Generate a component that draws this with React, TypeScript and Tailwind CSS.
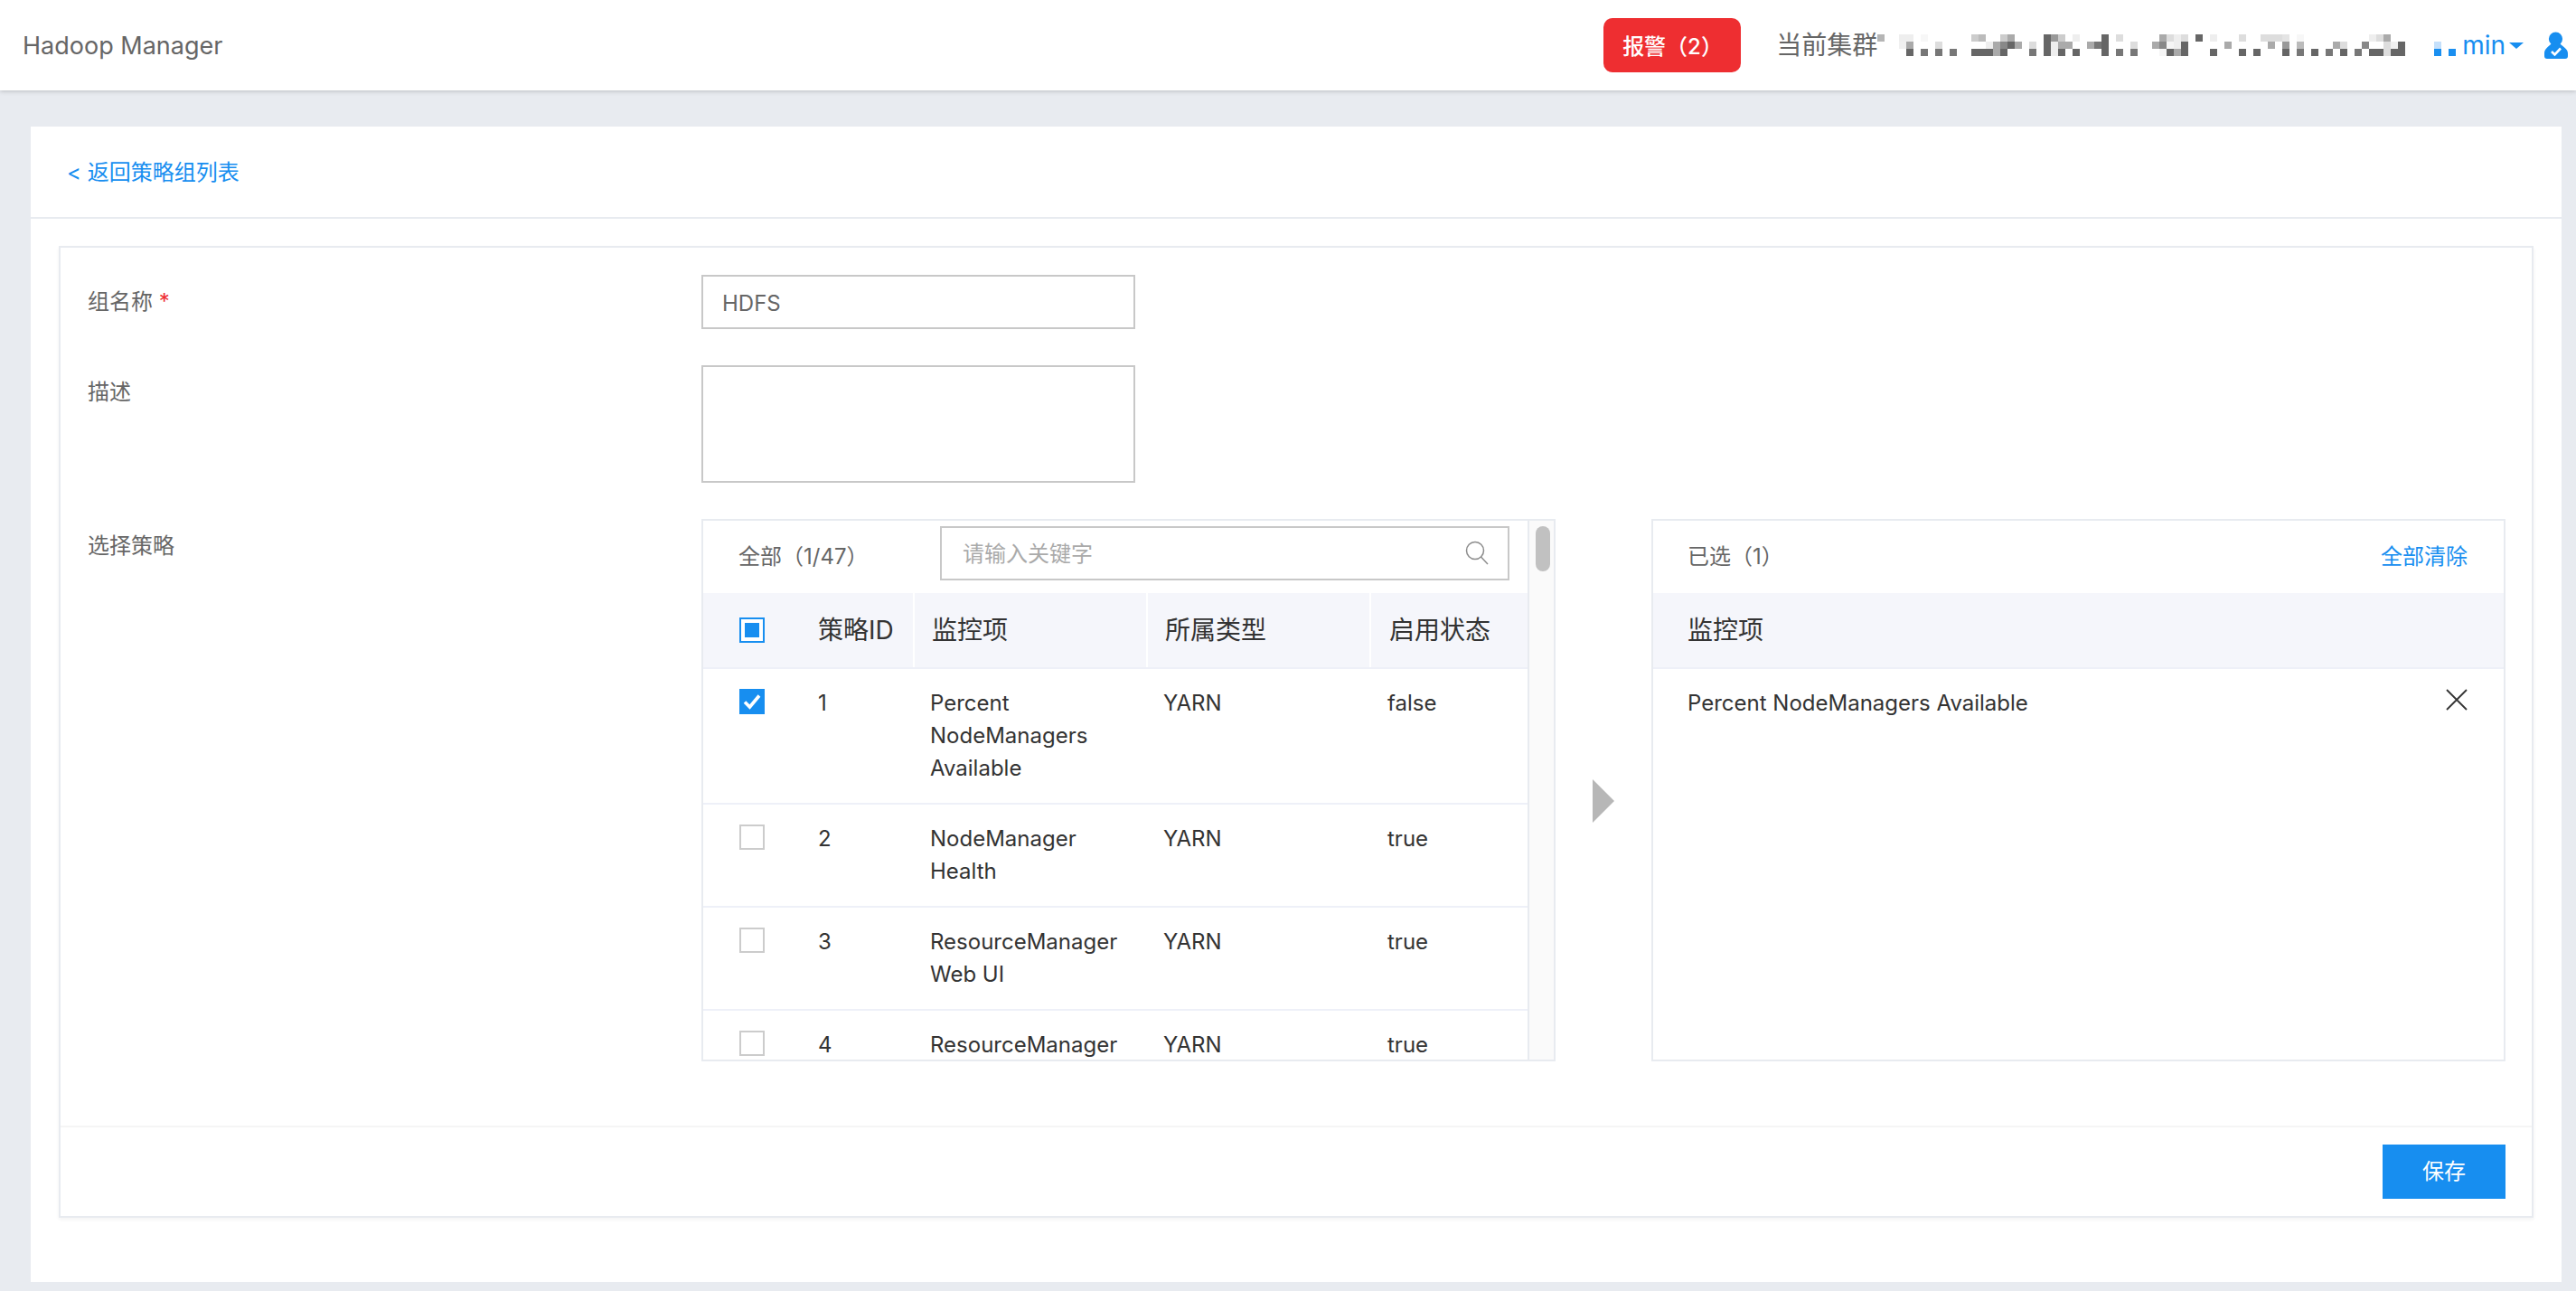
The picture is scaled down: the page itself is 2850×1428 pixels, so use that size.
import { Fragment } from 'react';

// Pixelated (redacted) cluster name: [column, colour] per row, 8px cells
const MOSAIC: [number, string][][] = [
  [[0, '#b5b5b5'], [3, '#eeeeee'], [4, '#eeeeee'], [6, '#f7f7f7'], [13, '#cccccc'], [14, '#bbbbbb'], [17, '#cccccc'], [18, '#aaaaaa'], [23, '#666666'], [24, '#999999'], [25, '#cccccc'], [27, '#eeeeee'], [31, '#666666'], [33, '#dddddd'], [39, '#aaaaaa'], [40, '#dddddd'], [41, '#eeeeee'], [42, '#dddddd'], [44, '#666666'], [46, '#eeeeee'], [50, '#dddddd'], [53, '#dddddd'], [54, '#dddddd'], [55, '#dddddd'], [56, '#e4e4e4'], [58, '#f7f7f7'], [68, '#eeeeee'], [69, '#dddddd'], [70, '#aaaaaa']],
  [[3, '#f0f0f0'], [4, '#aaaaaa'], [8, '#dddddd'], [15, '#eeeeee'], [16, '#aaaaaa'], [17, '#888888'], [18, '#666666'], [19, '#aaaaaa'], [21, '#dddddd'], [23, '#666666'], [24, '#eeeeee'], [25, '#aaaaaa'], [26, '#aaaaaa'], [29, '#aaaaaa'], [30, '#777777'], [31, '#666666'], [35, '#dddddd'], [38, '#aaaaaa'], [39, '#888888'], [40, '#f5f5f5'], [41, '#eeeeee'], [42, '#666666'], [48, '#aaaaaa'], [54, '#aaaaaa'], [56, '#999999'], [58, '#bbbbbb'], [63, '#aaaaaa'], [64, '#dddddd'], [67, '#888888'], [70, '#dddddd'], [71, '#f0f0f0'], [72, '#666666'], [77, '#c5e0fb']],
  [[4, '#666666'], [6, '#777777'], [8, '#777777'], [10, '#777777'], [13, '#666666'], [14, '#666666'], [15, '#666666'], [16, '#aaaaaa'], [17, '#666666'], [21, '#777777'], [23, '#666666'], [24, '#eeeeee'], [25, '#666666'], [27, '#666666'], [31, '#666666'], [33, '#777777'], [35, '#777777'], [39, '#f5f5f5'], [40, '#666666'], [41, '#aaaaaa'], [42, '#666666'], [46, '#666666'], [50, '#666666'], [52, '#666666'], [56, '#666666'], [58, '#777777'], [60, '#666666'], [62, '#777777'], [64, '#666666'], [66, '#777777'], [68, '#666666'], [69, '#666666'], [70, '#dddddd'], [71, '#666666'], [72, '#666666'], [77, '#1a8ff0'], [79, '#1a8ff0']],
];

const ROWS = [
  { id: 1, lines: ['Percent', 'NodeManagers', 'Available'], type: 'YARN', status: 'false', checked: true },
  { id: 2, lines: ['NodeManager', 'Health'], type: 'YARN', status: 'true', checked: false },
  { id: 3, lines: ['ResourceManager', 'Web UI'], type: 'YARN', status: 'true', checked: false },
  { id: 4, lines: ['ResourceManager'], type: 'YARN', status: 'true', checked: false },
];

function Mosaic() {
  return (
    <svg width="648" height="24" viewBox="0 0 648 24" shapeRendering="crispEdges" className="shrink-0">
      {MOSAIC.map((row, r) =>
        row.map(([col, color]) => (
          <rect key={`${r}-${col}`} x={col * 8} y={r * 8} width="8" height="8" fill={color} />
        ))
      )}
    </svg>
  );
}

function Checkbox({ checked }: { checked: boolean }) {
  if (checked) {
    return (
      <div className="w-[28px] h-[28px] bg-[#178ef0] flex items-center justify-center">
        <svg width="22" height="20" viewBox="0 0 22 20">
          <path d="M3 10.5 L8.5 16 L19 3.5" fill="none" stroke="#ffffff" strokeWidth="3.6" />
        </svg>
      </div>
    );
  }
  return <div className="w-[28px] h-[28px] border-2 border-[#cccccc] bg-white" />;
}

export default function App() {
  return (
    <div className="w-[2850px] h-[1428px] overflow-hidden bg-[#e8ebf0] flex flex-col text-[24px] leading-[36px] text-[#666666] font-['Inter','Noto_Sans_CJK_SC',sans-serif]">
      {/* Top bar */}
      <header className="relative z-10 h-[100px] shrink-0 bg-white flex items-center pl-[25px] pr-[9px] shadow-[0_1px_5px_rgba(0,0,0,0.2)]">
        <span className="text-[27px] text-[#666666] pt-[1px]">Hadoop Manager</span>
        <button className="ml-auto w-[152px] h-[60px] rounded-[10px] bg-[#ee2e31] text-white text-[24px] font-medium pl-[21px] pt-[4px] text-left">
          报警（2）
        </button>
        <span className="ml-[39px] text-[28px] text-[#666666] whitespace-nowrap">当前集群</span>
        <Mosaic />
        <span className="-ml-[1px] text-[28px] text-[#178ef0]">min</span>
        <svg width="16" height="7" viewBox="0 0 16 7" className="ml-[4px]">
          <polygon points="0,0 16,0 8,7" fill="#178ef0" />
        </svg>
        <svg width="26" height="30" viewBox="0 0 26 30" className="ml-[23px]">
          <circle cx="12.5" cy="8" r="7.6" fill="#178ef0" />
          <path d="M8 13 C4 17 0 19 0 24 V27 C0 29 1 30 3 30 H23 C25 30 26 29 26 27 V24 C26 19 21 17 17 13 Z" fill="#178ef0" />
          <path d="M8 22 L11.5 25.5 L18 18.5" fill="none" stroke="#ffffff" strokeWidth="2.6" />
        </svg>
      </header>

      {/* Page body */}
      <main className="pt-[40px] pl-[34px] pr-[16px]">
        <div className="h-[1278px] bg-white flex flex-col">
          <div className="h-[102px] shrink-0 border-b-2 border-[#e8ebf0] pl-[40px] pt-[2px] flex items-center text-[#178ef0]">
            &lt; 返回策略组列表
          </div>

          <div className="px-[31px] pt-[30px]">
            <div className="h-[1075px] border-2 border-[#e8ebf0] flex flex-col shadow-[0_2px_4px_rgba(0,0,0,0.05)]">
              <div className="flex-1 pt-[30px] pl-[30px] flex flex-col gap-[40px]">
                <div className="flex">
                  <label className="w-[679px] shrink-0 leading-[60px]">
                    组名称 <span className="text-[#ee2e31]">*</span>
                  </label>
                  <div className="w-[480px] h-[60px] border-2 border-[#c8c8c8] pl-[21px] leading-[58px] pt-[1px]">HDFS</div>
                </div>
                <div className="flex">
                  <label className="w-[679px] shrink-0 leading-[60px]">描述</label>
                  <div className="w-[480px] h-[130px] border-2 border-[#c8c8c8]" />
                </div>
                <div className="flex">
                  <label className="w-[679px] shrink-0 leading-[60px]">选择策略</label>

                  {/* Source list */}
                  <div className="w-[945px] h-[600px] border-2 border-[#e8ebf0] flex overflow-hidden">
                    <div className="w-[912px] shrink-0">
                      <div className="h-[80px] flex items-center pl-[39px]">
                        <span>全部（1/47）</span>
                        <div className="ml-auto mr-[20px] self-start mt-[6px] w-[630px] h-[60px] border-2 border-[#c8c8c8] flex items-center pl-[23px] pr-[20px] text-[#aaaaaa]">
                          <span className="pt-[1px]">请输入关键字</span>
                          <svg width="27" height="27" viewBox="0 0 27 27" className="ml-auto -mt-[2px]">
                            <circle cx="11" cy="11" r="9.5" fill="none" stroke="#8c8c8c" strokeWidth="1.5" />
                            <path d="M17.5 18 L25 26" fill="none" stroke="#8c8c8c" strokeWidth="1.5" />
                          </svg>
                        </div>
                      </div>
                      <div className="grid grid-cols-[234px_258px_247px_173px] h-[84px] bg-[#f5f6fb] border-b-2 border-[#eef0f8] text-[28px] text-[#333333] items-stretch">
                        <div className="flex items-center pl-[40px] border-r-2 border-white">
                          <div className="w-[28px] h-[28px] border-2 border-[#178ef0] bg-white flex items-center justify-center">
                            <div className="w-[16px] h-[16px] bg-[#178ef0]" />
                          </div>
                          <span className="ml-[59px]">策略ID</span>
                        </div>
                        <div className="flex items-center pl-[19px] border-r-2 border-white">监控项</div>
                        <div className="flex items-center pl-[19px] border-r-2 border-white">所属类型</div>
                        <div className="flex items-center pl-[20px]">启用状态</div>
                      </div>
                      {ROWS.map((row) => (
                        <div
                          key={row.id}
                          className="grid grid-cols-[234px_258px_247px_173px] border-b-2 border-[#eef0f8] pt-[20px] pb-[20px] text-[#333333]"
                        >
                          <div className="flex items-start pl-[40px]">
                            <div className="pt-[2px]">
                              <Checkbox checked={row.checked} />
                            </div>
                            <span className="ml-[59px]">{row.id}</span>
                          </div>
                          <div className="pl-[17px]">
                            {row.lines.map((line) => (
                              <Fragment key={line}>
                                {line}
                                <br />
                              </Fragment>
                            ))}
                          </div>
                          <div className="pl-[17px]">{row.type}</div>
                          <div className="pl-[18px]">{row.status}</div>
                        </div>
                      ))}
                    </div>
                    {/* Scrollbar */}
                    <div className="flex-1 bg-[#fafafa] border-l-2 border-[#e8ebf0] pl-[7px] pt-[6px]">
                      <div className="w-[16px] h-[50px] rounded-full bg-[#c1c1c1]" />
                    </div>
                  </div>

                  <div className="w-[106px] shrink-0 pt-[24px] flex items-center justify-center">
                    <svg width="24" height="48" viewBox="0 0 24 48">
                      <polygon points="0,0 24,24 0,48" fill="#b7b7b7" />
                    </svg>
                  </div>

                  {/* Selected list */}
                  <div className="w-[945px] h-[600px] border-2 border-[#e8ebf0]">
                    <div className="h-[80px] flex items-center justify-between pl-[38px] pr-[40px]">
                      <span>已选（1）</span>
                      <span className="text-[#178ef0]">全部清除</span>
                    </div>
                    <div className="h-[84px] bg-[#f5f6fb] border-b-2 border-[#eef0f8] flex items-center pl-[38px] text-[28px] text-[#333333]">
                      监控项
                    </div>
                    <div className="flex justify-between pl-[38px] pr-[40px] pt-[20px] text-[#333333]">
                      <span>Percent NodeManagers Available</span>
                      <svg width="24" height="24" viewBox="0 0 24 24" className="mt-[2px]">
                        <path d="M1 1 L23 23 M23 1 L1 23" fill="none" stroke="#333333" strokeWidth="1.8" />
                      </svg>
                    </div>
                  </div>
                </div>
              </div>

              <div className="h-[100px] shrink-0 border-t-2 border-[#f5f5f5] flex items-center justify-end pr-[29px]">
                <button className="w-[136px] h-[60px] bg-[#178ef0] text-white text-[24px]">保存</button>
              </div>
            </div>
          </div>
        </div>
      </main>
    </div>
  );
}
